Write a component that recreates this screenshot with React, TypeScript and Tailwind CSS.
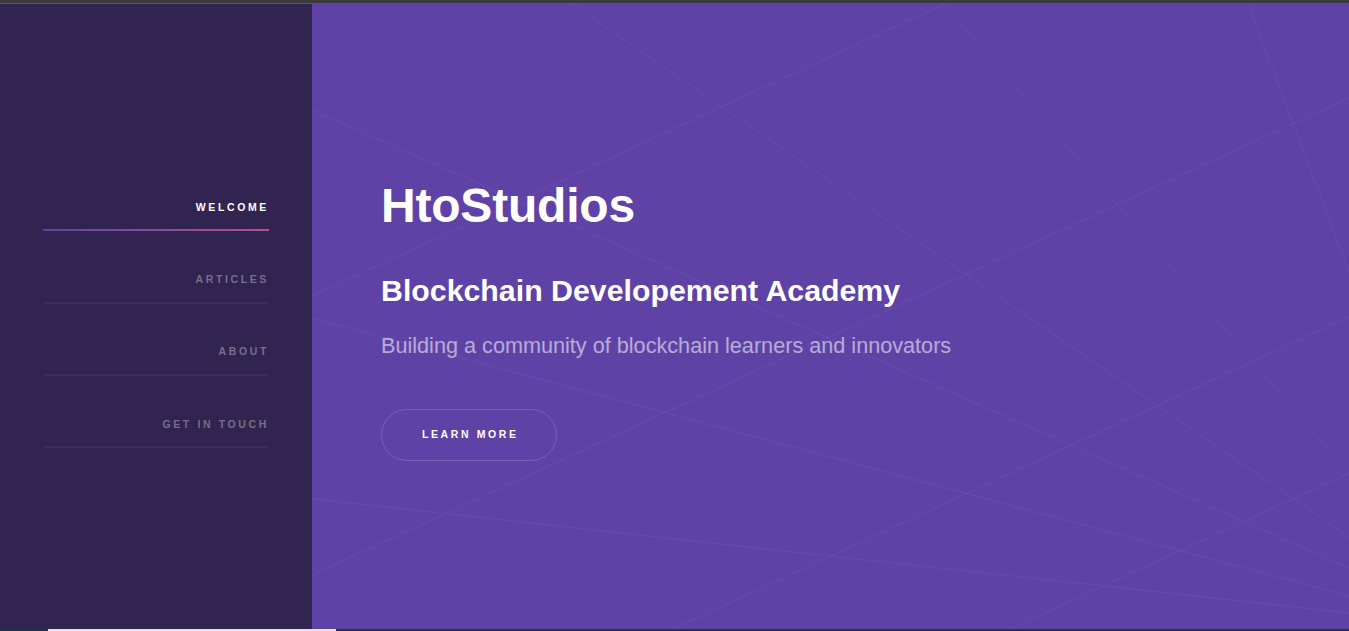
import React from 'react';

const navItems = [
  { label: 'Welcome', active: true },
  { label: 'Articles', active: false },
  { label: 'About', active: false },
  { label: 'Get in touch', active: false },
];

// background lines, coordinates are relative to the hero panel (1037 x 625)
const lines: [number, number, number, number][] = [
  [260, 0, 1037, 533],
  [0, 106, 1037, 564],
  [0, 314, 1037, 592],
  [0, 292, 632, 0],
  [632, 0, 1037, 469],
  [936, 0, 1037, 268],
  [0, 571, 1037, 94],
  [361, 625, 1037, 313],
  [698, 625, 1037, 469],
  [0, 495, 1037, 609],
];

const Sidebar: React.FC = () => {
  return (
    <aside className="w-[312px] shrink-0 bg-[#312450] flex flex-col justify-center pb-[26px]">
      <nav className="pl-[43px]">
        <ul className="w-[226px]">
          {navItems.map((item) => (
            <li key={item.label} className="relative pt-[38.8px] pb-[15.5px]">
              <a
                href="#"
                className={
                  'block text-right uppercase font-bold text-[10.5px] leading-[18px] tracking-[0.25em] ' +
                  (item.active ? 'text-white' : 'text-white/35')
                }
              >
                {item.label}
              </a>
              {item.active ? (
                <div className="absolute left-0 right-0 bottom-0 h-[2px] bg-gradient-to-r from-[#5e42a6] to-[#b74e91]" />
              ) : (
                <div className="absolute left-0 right-0 bottom-0 h-[2px] bg-white/5" />
              )}
            </li>
          ))}
        </ul>
      </nav>
    </aside>
  );
};

const Hero: React.FC = () => {
  return (
    <section className="relative flex-1 bg-[#5e42a6] overflow-hidden">
      {/* decorative lines */}
      <svg
        className="absolute inset-0 w-full h-full"
        viewBox="0 0 1037 625"
        preserveAspectRatio="none"
      >
        {lines.map(([x1, y1, x2, y2], i) => (
          <line key={i} x1={x1} y1={y1} x2={x2} y2={y2} stroke="rgba(255,255,255,0.06)" strokeWidth="1" />
        ))}
      </svg>

      <div className="relative pl-[69px] pt-[177.6px] flex flex-col items-start">
        <h1 className="text-white font-bold text-[48px] leading-none tracking-[-0.2px]">
          HtoStudios
        </h1>
        <h2 className="mt-[46.4px] text-white font-bold text-[30.3px] leading-none">
          Blockchain Developement Academy
        </h2>
        <p className="mt-[29.2px] text-white/55 text-[21.65px] leading-none">
          Building a community of blockchain learners and innovators
        </p>
        <a
          href="#"
          className="mt-[51.9px] w-[176px] h-[52px] rounded-full border border-white/15 flex items-center justify-center text-white font-bold uppercase text-[10.5px] tracking-[0.25em] pl-[2.6px]"
        >
          Learn More
        </a>
      </div>
    </section>
  );
};

export default function App() {
  return (
    <div className="h-[631px] w-full flex flex-col overflow-hidden font-['Liberation_Sans',Arial,sans-serif]">
      <div className="h-[3px] bg-[#3b3b3b]" />
      <div className="h-px bg-[#5a5a5a]" />
      <div className="flex-1 flex min-h-0">
        <Sidebar />
        <Hero />
      </div>
      <div className="h-[2px] bg-[#1f3646] flex">
        <div className="ml-[48px] w-[288px] h-full bg-[#e6e3ec]" />
      </div>
    </div>
  );
}
